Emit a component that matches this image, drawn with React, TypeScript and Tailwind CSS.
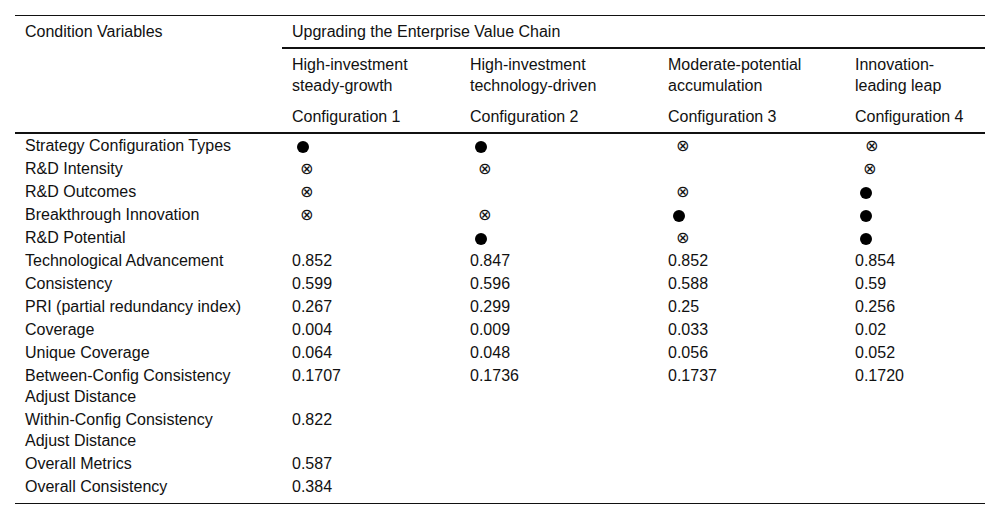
import React from 'react';

type Mark = 'dot' | 'x' | '';

interface Row {
  label: string[];
  cells: string[];
}

const marks: { label: string; cells: Mark[] }[] = [
  { label: 'Strategy Configuration Types', cells: ['dot', 'dot', 'x', 'x'] },
  { label: 'R&D Intensity', cells: ['x', 'x', '', 'x'] },
  { label: 'R&D Outcomes', cells: ['x', '', 'x', 'dot'] },
  { label: 'Breakthrough Innovation', cells: ['x', 'x', 'dot', 'dot'] },
  { label: 'R&D Potential', cells: ['', 'dot', 'x', 'dot'] },
];

const metrics: Row[] = [
  { label: ['Technological Advancement'], cells: ['0.852', '0.847', '0.852', '0.854'] },
  { label: ['Consistency'], cells: ['0.599', '0.596', '0.588', '0.59'] },
  { label: ['PRI (partial redundancy index)'], cells: ['0.267', '0.299', '0.25', '0.256'] },
  { label: ['Coverage'], cells: ['0.004', '0.009', '0.033', '0.02'] },
  { label: ['Unique Coverage'], cells: ['0.064', '0.048', '0.056', '0.052'] },
  { label: ['Between-Config Consistency', 'Adjust Distance'], cells: ['0.1707', '0.1736', '0.1737', '0.1720'] },
  { label: ['Within-Config Consistency', 'Adjust Distance'], cells: ['0.822', '', '', ''] },
  { label: ['Overall Metrics'], cells: ['0.587', '', '', ''] },
  { label: ['Overall Consistency'], cells: ['0.384', '', '', ''] },
];

const configs = [
  { name: ['High-investment', 'steady-growth'], id: 'Configuration 1' },
  { name: ['High-investment', 'technology-driven'], id: 'Configuration 2' },
  { name: ['Moderate-potential', 'accumulation'], id: 'Configuration 3' },
  { name: ['Innovation-', 'leading leap'], id: 'Configuration 4' },
];

const MarkCell = ({ mark, wide }: { mark: Mark; wide?: boolean }) => {
  if (mark === 'dot') {
    return (
      <div className="h-[21px] flex items-center pt-[3px]">
        <span className="block w-3 h-3 ml-[5px] rounded-full bg-black" />
      </div>
    );
  }
  if (mark === 'x') {
    return (
      <div className="h-[21px] flex items-center">
        <span
          className={`block text-[16px] leading-[21px] text-[#111] ${wide ? 'ml-[10px]' : 'ml-[8px]'}`}
          style={{ fontFamily: '"DejaVu Sans", sans-serif' }}
        >
          ⊗
        </span>
      </div>
    );
  }
  return <div className="h-[21px]" />;
};

export default function App() {
  const cell = 'text-left align-top pl-[10px] pr-2 py-px font-normal';
  return (
    <div
      className="w-[1000px] h-[519px] bg-white pt-[15px] px-[15px] text-[16px] leading-[21px] text-[#111]"
      style={{ fontFamily: '"Liberation Sans", Arial, sans-serif' }}
    >
      <table className="w-[970px] table-fixed border-separate border-spacing-0 border-t border-b border-[#111]">
        <colgroup>
          <col className="w-[267px]" />
          <col className="w-[178px]" />
          <col className="w-[198px]" />
          <col className="w-[187px]" />
          <col className="w-[140px]" />
        </colgroup>
        <thead>
          <tr>
            <th rowSpan={3} className="text-left align-top font-normal pl-[10px] pt-[5px] border-b-2 border-[#111]">
              Condition Variables
            </th>
            <th colSpan={4} className="text-left font-normal pl-[10px] pt-[5px] pb-[5px] border-b-2 border-[#111]">
              Upgrading the Enterprise Value Chain
            </th>
          </tr>
          <tr>
            {configs.map((c) => (
              <th key={c.id} className="text-left align-top font-normal pl-[10px] pt-[5px] pb-[5px]">
                {c.name.map((n) => (
                  <div key={n}>{n}</div>
                ))}
              </th>
            ))}
          </tr>
          <tr>
            {configs.map((c) => (
              <th key={c.id} className="text-left font-normal pl-[10px] pt-[5px] pb-[5px] border-b-2 border-[#111]">
                {c.id}
              </th>
            ))}
          </tr>
        </thead>
        <tbody>
          {marks.map((r, ri) => (
            <tr key={r.label}>
              <td className={cell}>{r.label}</td>
              {r.cells.map((m, i) => (
                <td key={i} className="text-left align-top pl-[10px] py-px">
                  <MarkCell mark={m} wide={ri === 0 && i === 3} />
                </td>
              ))}
            </tr>
          ))}
          {metrics.map((r, ri) => (
            <tr key={r.label.join(' ')}>
              <td className={`${cell} ${ri === metrics.length - 1 ? 'pb-[6px]' : ''}`}>
                {r.label.map((l) => (
                  <div key={l}>{l}</div>
                ))}
              </td>
              {r.cells.map((v, i) => (
                <td key={i} className={cell}>
                  {v}
                </td>
              ))}
            </tr>
          ))}
        </tbody>
      </table>
    </div>
  );
}
